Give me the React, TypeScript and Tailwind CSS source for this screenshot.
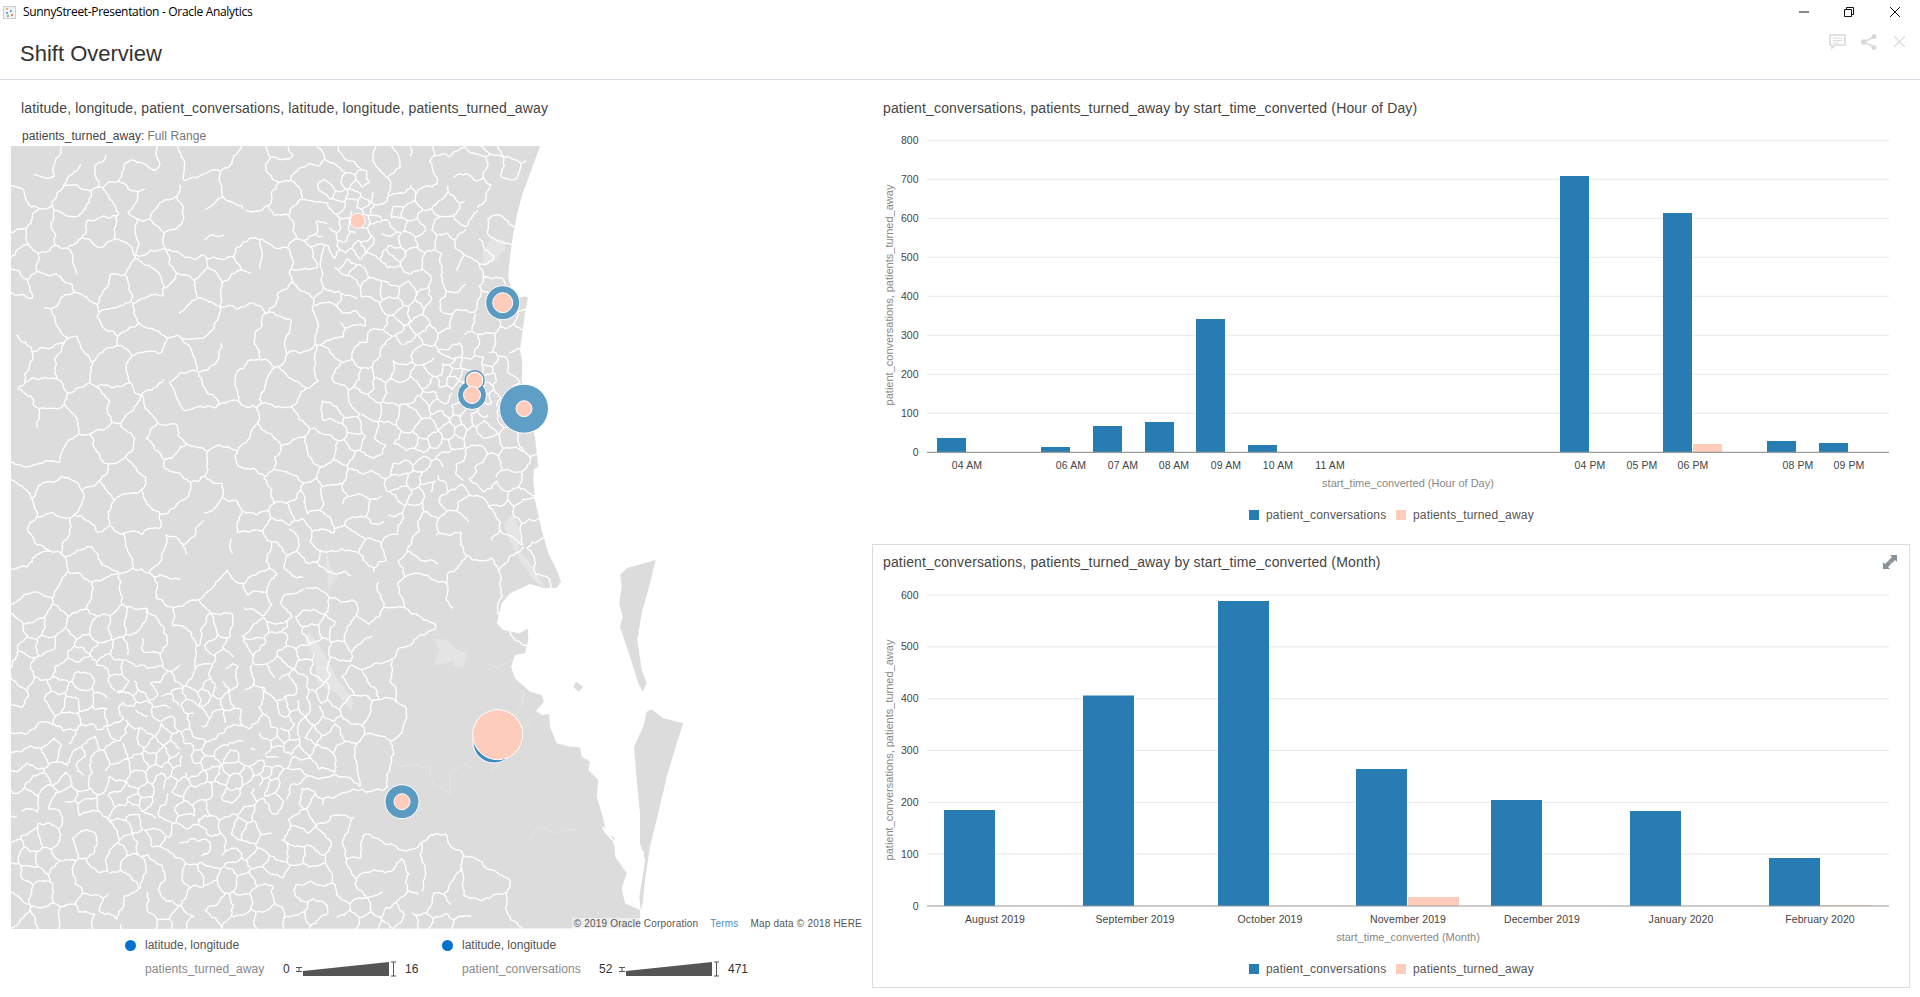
import React from "react";

type P = [number, number];
const z8 = (p: P): P => [350 + p[0] / 3, 640 + p[1] / 3];
const z7 = (p: P): P => [400 + p[0] / 3, 180 + p[1] / 3];
const z9 = (p: P): P => [p[0] / 3, 300 + p[1] / 3];
const z10 = (p: P): P => [p[0] / 3, 600 + p[1] / 3];
const z11 = (p: P): P => [450 + p[0] / 3, 470 + p[1] / 3];

let seed = 98765;
const rnd = () => {
  seed = (seed * 1664525 + 1013904223) % 4294967296;
  return seed / 4294967296;
};

const poly = (pts: P[]) => "M" + pts.map((p) => `${p[0].toFixed(1)} ${p[1].toFixed(1)}`).join("L") + "Z";
const inside = (pt: P, vs: P[]) => {
  let c = false;
  for (let i = 0, j = vs.length - 1; i < vs.length; j = i++) {
    const [xi, yi] = vs[i];
    const [xj, yj] = vs[j];
    if (yi > pt[1] !== yj > pt[1] && pt[0] < ((xj - xi) * (pt[1] - yi)) / (yj - yi) + xi) c = !c;
  }
  return c;
};

const mainland: P[] = [
  [11, 146],
  [540, 146],
  ...([[383,0],[368,40],[352,100],[338,170],[328,250],[325,290],[335,335],[360,352],[385,348],[375,400],[365,470],[360,510],[367,545],[365,600],[385,690],[405,770],[415,860],[402,868],[400,900]] as P[]).map(z7),
  ...([[250,30],[255,90],[275,180],[295,250],[320,300],[333,335],[320,353],[285,355],[240,342],[180,370],[155,400],[145,440],[140,460],[160,480],[210,490],[233,475],[235,510],[225,550],[195,555],[183,590],[195,625],[240,665],[275,675],[282,695],[258,722],[275,735],[297,732]] as P[]).map(z11),
  ...([[600,260],[620,310],[660,320],[690,322],[695,350],[720,365],[715,390],[745,420],[740,470],[755,520],[770,580],[795,595],[795,650],[830,700],[815,745],[825,790],[870,810],[870,865]] as P[]).map(z8),
  [11, 929],
];
const moreton = ([[510,315],[530,295],[617,270],[600,340],[575,430],[562,510],[575,600],[590,640],[578,665],[565,640],[540,560],[520,500],[510,470],[518,440],[508,400],[515,350]] as P[]).map(z11);
const islet = ([[378,635],[400,650],[385,665],[370,650]] as P[]).map(z11);
const stradbroke = ([[890,215],[905,208],[940,235],[1000,250],[985,295],[950,410],[915,560],[900,620],[885,720],[878,790],[872,810],[868,770],[880,700],[885,660],[870,610],[870,520],[860,420],[852,320],[880,260]] as P[]).map(z8);

const waters: P[][] = [
  ([[275,175],[315,180],[315,205],[290,240],[245,260],[250,215]] as P[]).map(z7),
  ([[925,95],[915,125],[945,175],[950,250],[1010,280],[1055,335],[1060,300],[1010,235],[975,165],[940,110]] as P[]).map(z10),
  ([[975,720],[990,800],[1015,830],[985,865],[980,800]] as P[]).map(z9),
  ([[1300,115],[1340,120],[1390,170],[1340,190],[1300,195],[1320,150]] as P[]).map(z10),
  ([[160,165],[190,130],[210,180],[205,240],[240,280],[285,350],[260,340],[215,280],[185,225]] as P[]).map(z11),
  ([[0,530],[50,550],[40,590],[10,590]] as P[]).map(z11),
];

const empty: P[] = [
  [390,600],[385,640],[397,668],[370,700],[382,743],[340,753],[317,763],[310,787],[330,797],[333,835],[370,840],[378,875],[410,870],[420,880],[470,885],[490,929],[660,929],[560,700],[530,600],[505,550],[440,545],[425,590],
];

const near = (x: number, y: number, cx: number, cy: number, d: number) => Math.hypot(x - cx, y - cy) < d;
const spacing = (x: number, y: number) => {
  if (near(x, y, 357, 225, 48)) return 8;
  if (near(x, y, 472, 395, 42)) return 7.5;
  if (near(x, y, 440, 470, 45)) return 11;
  if (near(x, y, 400, 320, 40)) return 13;
  if (x >= 130 && x <= 340 && y >= 690 && y <= 810) return 9.5;
  if (x < 345 && y >= 620) return y > 860 ? 17 : x < 60 ? 16 : 12;
  if (x >= 345 && y >= 850) return 14;
  if (x >= 330 && y >= 530) return 20;
  if (x >= 330) return 15;
  if (x >= 250 && y >= 500) return 16;
  return y < 300 ? 22 : 28;
};

const warp = (p: P): P => [
  p[0] + 3.5 * Math.sin(p[1] / 23 + 1) + 2.5 * Math.sin(p[0] / 17 + p[1] / 31),
  p[1] + 3.5 * Math.sin(p[0] / 27) + 2.5 * Math.cos(p[1] / 19 - p[0] / 41),
];

const fractal = (a: P, b: P, out: string[], rough = 0.34) => {
  const dx = b[0] - a[0];
  const dy = b[1] - a[1];
  const len = Math.hypot(dx, dy);
  if (len < 2.6) {
    out.push(`L${b[0].toFixed(1)} ${b[1].toFixed(1)}`);
    return;
  }
  const o = (rnd() - 0.5) * rough;
  const m: P = [a[0] + dx / 2 + dy * o, a[1] + dy / 2 - dx * o];
  fractal(a, m, out, rough);
  fractal(m, b, out, rough);
};

type V = { p: P; l: number };
const clipCell = (cell: V[], a: number, b: number, c: number, j: number) => {
  const out: V[] = [];
  for (let k = 0; k < cell.length; k++) {
    const cur = cell[k];
    const nxt = cell[(k + 1) % cell.length];
    const dc = a * cur.p[0] + b * cur.p[1] - c;
    const dn = a * nxt.p[0] + b * nxt.p[1] - c;
    const cross = (): P => {
      const t = dc / (dc - dn);
      return [cur.p[0] + (nxt.p[0] - cur.p[0]) * t, cur.p[1] + (nxt.p[1] - cur.p[1]) * t];
    };
    if (dc <= 0) {
      out.push(cur);
      if (dn > 0) out.push({ p: cross(), l: j });
    } else if (dn <= 0) {
      out.push({ p: cross(), l: cur.l });
    }
  }
  return out;
};

const buildNetwork = () => {
  const sites: P[] = [];
  const flags: boolean[] = [];
  for (let t = 0; t < 16000; t++) {
    const p: P = [11 + rnd() * 560, 146 + rnd() * 783];
    if (!inside(p, mainland)) continue;
    const isEmpty = inside(p, empty);
    const r = isEmpty ? 55 : spacing(p[0], p[1]);
    if (sites.some((s) => Math.hypot(s[0] - p[0], s[1] - p[1]) < r)) continue;
    sites.push(p);
    flags.push(isEmpty);
  }
  let d = "";
  sites.forEach((s, i) => {
    let cell: V[] = [
      { p: [-50, 60], l: -1 },
      { p: [760, 60], l: -1 },
      { p: [760, 1000], l: -1 },
      { p: [-50, 1000], l: -1 },
    ];
    sites.forEach((q, j) => {
      if (j === i) return;
      if (Math.hypot(q[0] - s[0], q[1] - s[1]) > 200) return;
      cell = clipCell(cell, 2 * (q[0] - s[0]), 2 * (q[1] - s[1]), q[0] * q[0] + q[1] * q[1] - s[0] * s[0] - s[1] * s[1], j);
    });
    for (let k = 0; k < cell.length; k++) {
      const e = cell[k];
      if (e.l <= i) continue;
      if (flags[i] && flags[e.l]) continue;
      if (rnd() < 0.2) continue;
      const a = warp(e.p);
      const b = warp(cell[(k + 1) % cell.length].p);
      const out: string[] = [`M${a[0].toFixed(1)} ${a[1].toFixed(1)}`];
      fractal(a, b, out);
      d += out.join("");
    }
  });
  return d;
};

const boundaries = buildNetwork();

const Z8faint: P[][] = [
  [[100,330],[150,380],[240,380],[250,430],[300,460],[300,400],[340,375],[380,390]],
  [[575,220],[520,270],[490,300],[420,395]],
  [[520,150],[490,240]],
  [[400,60],[440,80],[480,60]],
  [[530,610],[570,560],[620,580],[680,570]],
];
const chain = (pts: P[]) => {
  const out: string[] = [`M${pts[0][0].toFixed(1)} ${pts[0][1].toFixed(1)}`];
  for (let i = 1; i < pts.length; i++) fractal(pts[i - 1], pts[i], out, 0.2);
  return out.join("");
};
const faint = Z8faint.map((l) => chain(l.map(z8))).join("");
const mangrove = ([
  [[770,500],[800,530],[810,580],[850,520]],
  [[800,600],[850,600],[880,640],[840,680],[800,650],[800,600]],
  [[815,620],[860,650]],
  [[760,560],[790,600],[810,660]],
  [[780,460],[800,490]],
] as P[][]).map((l) => chain(l.map(z8))).join("");

function MapView() {
  return (
    <svg viewBox="11 146 851 783" className="block h-[783px] w-[851px]">
      <path d={poly(mainland)} className="fill-[#dcdcdc]" />
      {waters.map((w, i) => (
        <path key={i} d={poly(w)} className="fill-[#e5e5e5]" />
      ))}
      <path d={faint} className="fill-none stroke-[#e6e6e6] stroke-1" />
      <path d={boundaries} className="fill-none stroke-white stroke-[1.35]" />
      <path d={poly(moreton)} className="fill-[#dcdcdc]" />
      <path d={poly(islet)} className="fill-[#dcdcdc]" />
      <path d={poly(stradbroke)} className="fill-[#dcdcdc]" />
      <path d={mangrove} className="fill-none stroke-white stroke-2" />
      <g className="stroke-white stroke-1">
        <circle cx="494" cy="742" r="21" className="fill-[#3f8bbb]" />
        <circle cx="497.7" cy="734.7" r="25" className="fill-[#fdccbb]" />
        <circle cx="402" cy="801.7" r="17" className="fill-[#5c9bc1]" />
        <circle cx="402" cy="801.7" r="8" className="fill-[#fdccbb]" />
        <circle cx="524" cy="408.7" r="24.5" className="fill-[#5f9fc6]" />
        <circle cx="524" cy="408.7" r="8" className="fill-[#fdccbb]" />
        <circle cx="502.7" cy="302.7" r="17" className="fill-[#5c9bc1]" />
        <circle cx="502.7" cy="302.7" r="10" className="fill-[#fdccbb]" />
        <circle cx="472" cy="395" r="14.5" className="fill-[#5c9bc1]" />
        <circle cx="474.7" cy="380.3" r="9.5" className="fill-[#fdccbb] stroke-[#5c9bc1] stroke-[1.5]" />
        <circle cx="474.7" cy="380.3" r="8" className="fill-[#fdccbb]" />
        <circle cx="472" cy="395" r="8.5" className="fill-[#fdccbb]" />
        <circle cx="357.6" cy="220.7" r="7.5" className="fill-[#fdccbb]" />
      </g>
    </svg>
  );
}

type Bar = { x: number; w: number; top: number; pink?: boolean };
type ChartCfg = {
  vb: [number, number, number, number];
  ticks: { v: string; y: number }[];
  zeroY: number;
  bars: Bar[];
  labels: { t: string; x: number }[];
  labelY: number;
  xTitle: string;
  xTitleY: number;
  yTitleCy: number;
  legendY: number;
};

function Chart({ cfg }: { cfg: ChartCfg }) {
  const [vx, vy, vw, vh] = cfg.vb;
  return (
    <svg viewBox={`${vx} ${vy} ${vw} ${vh}`} width={vw} height={vh} className="block shrink-0">
      {cfg.ticks.map((t) => (
        <g key={t.v}>
          {t.v !== "0" && <line x1="927" x2="1889" y1={t.y} y2={t.y} className="stroke-[#e8e8ee] stroke-1" />}
          <text x="918.5" y={t.y + 3.5} textAnchor="end" className="fill-[#444444] text-[10.5px]">
            {t.v}
          </text>
        </g>
      ))}
      {cfg.bars.map((b, i) => (
        <rect key={i} x={b.x} y={b.top} width={b.w} height={cfg.zeroY - b.top} className={b.pink ? "fill-[#fdccbb]" : "fill-[#267cb3]"} />
      ))}
      <line x1="927" x2="1889" y1={cfg.zeroY} y2={cfg.zeroY} className="stroke-[#9a9a9a] stroke-[1.2]" />
      {cfg.labels.map((l) => (
        <text key={l.t} x={l.x} y={cfg.labelY + 3.5} textAnchor="middle" className="fill-[#444444] text-[10.5px] tracking-[0.1px]">
          {l.t}
        </text>
      ))}
      <text x="1408" y={cfg.xTitleY + 3.5} textAnchor="middle" className="fill-[#888888] text-[11px]">
        {cfg.xTitle}
      </text>
      <text
        x="0"
        y="0"
        textAnchor="middle"
        transform={`translate(892.5 ${cfg.yTitleCy}) rotate(-90)`}
        className="fill-[#888888] text-[11px]"
      >
        patient_conversations, patients_turned_away
      </text>
      <rect x="1249" y={cfg.legendY - 5} width="10" height="10" className="fill-[#267cb3]" />
      <text x="1266" y={cfg.legendY + 4} className="fill-[#555555] text-[12px] tracking-[0.17px]">
        patient_conversations
      </text>
      <rect x="1396" y={cfg.legendY - 5} width="10" height="10" className="fill-[#fdccbb]" />
      <text x="1413" y={cfg.legendY + 4} className="fill-[#555555] text-[12px] tracking-[0.17px]">
        patients_turned_away
      </text>
    </svg>
  );
}

const hb = (x: number, top: number, pink = false): Bar => ({ x, w: 29, top, pink });
const chart1: ChartCfg = {
  vb: [873, 125, 1036, 419],
  ticks: [800, 700, 600, 500, 400, 300, 200, 100, 0].map((v) => ({ v: String(v), y: 452.3 - v * 0.39 })),
  zeroY: 452.3,
  bars: [hb(937, 438), hb(1041, 447), hb(1093, 426), hb(1145, 422), hb(1196, 319), hb(1248, 445), hb(1560, 176), hb(1663, 213), hb(1693, 444, true), hb(1767, 441), hb(1819, 443)],
  labels: [
    ["04 AM", 967],
    ["06 AM", 1071],
    ["07 AM", 1123],
    ["08 AM", 1174],
    ["09 AM", 1226],
    ["10 AM", 1278],
    ["11 AM", 1330],
    ["04 PM", 1590],
    ["05 PM", 1642],
    ["06 PM", 1693],
    ["08 PM", 1798],
    ["09 PM", 1849],
  ].map(([t, x]) => ({ t: t as string, x: x as number })),
  labelY: 465,
  xTitle: "start_time_converted (Hour of Day)",
  xTitleY: 483,
  yTitleCy: 295,
  legendY: 515,
};

const mb = (x: number, top: number, pink = false): Bar => ({ x, w: 51, top, pink });
const chart2: ChartCfg = {
  vb: [873, 580, 1036, 407],
  ticks: [600, 500, 400, 300, 200, 100, 0].map((v) => ({ v: String(v), y: 906 - v * 0.5183 })),
  zeroY: 906,
  bars: [mb(944, 810), mb(1083, 695.5), mb(1218, 601), mb(1356, 769), mb(1408, 897, true), mb(1491, 800), mb(1630, 811), mb(1769, 858), mb(1820, 905, true)],
  labels: [
    ["August 2019", 995],
    ["September 2019", 1135],
    ["October 2019", 1270],
    ["November 2019", 1408],
    ["December 2019", 1542],
    ["January 2020", 1681],
    ["February 2020", 1820],
  ].map(([t, x]) => ({ t: t as string, x: x as number })),
  labelY: 919,
  xTitle: "start_time_converted (Month)",
  xTitleY: 937,
  yTitleCy: 750,
  legendY: 969,
};

function Wedge() {
  return (
    <svg width="101" height="16" viewBox="0 0 101 16" className="block shrink-0">
      <path d="M0 6.5H6M3 6.5V10.5M0 10.5H6" className="fill-none stroke-[#555555] stroke-1" />
      <polygon points="7,10 93,1 93,15 7,15" className="fill-[#555555]" />
      <path d="M95 1H100M97.5 1V15M95 15H100" className="fill-none stroke-[#555555] stroke-1" />
    </svg>
  );
}

function MapLegend({ label, min, max, minW, nameW }: { label: string; min: string; max: string; minW: string; nameW: string }) {
  return (
    <div className="w-[317px] shrink-0 text-[12px]">
      <div className="flex h-[16px] items-center">
        <span className="h-[11px] w-[11px] rounded-full bg-[#0572ce]" />
        <span className="ml-[9px] text-[#555555]">latitude, longitude</span>
      </div>
      <div className="mt-[8px] flex h-[16px] items-center pl-[20px]">
        <span className={`${nameW} whitespace-nowrap tracking-[0.1px] text-[#888888]`}>{label}</span>
        <span className={`${minW} whitespace-nowrap text-[#333333]`}>{min}</span>
        <Wedge />
        <span className="ml-[8px] text-[#333333]">{max}</span>
      </div>
    </div>
  );
}

export default function App() {
  return (
    <div className="flex h-[997px] w-[1920px] flex-col overflow-hidden bg-white font-['Liberation_Sans',Arial,sans-serif] text-[#333333]">
      <div className="flex h-[24px] shrink-0 items-center justify-between">
        <div className="flex items-center pl-[3px]">
          <svg width="13" height="13" viewBox="0 0 13 13" className="shrink-0">
            <rect x="0.5" y="0.5" width="12" height="12" className="fill-[#f1f1f4] stroke-[#cfcfd4] stroke-1" />
            <circle cx="4" cy="3" r="1" className="fill-[#e8a23a]" />
            <circle cx="8" cy="5" r="1" className="fill-[#4a8fd0]" />
            <circle cx="4" cy="7" r="1" className="fill-[#4a8fd0]" />
            <circle cx="9" cy="9" r="1" className="fill-[#d86a5a]" />
            <circle cx="5" cy="10" r="1" className="fill-[#5aa860]" />
          </svg>
          <span className="ml-[7px] whitespace-nowrap font-['Open_Sans',sans-serif] text-[12px] tracking-[-0.31px] text-[#000000]">
            SunnyStreet-Presentation - Oracle Analytics
          </span>
        </div>
        <div className="flex items-center pr-[20px]">
          <svg width="10" height="10" viewBox="0 0 10 10" className="mr-[35px]">
            <path d="M0 5H10" className="stroke-[#111111] stroke-1" />
          </svg>
          <svg width="10" height="10" viewBox="0 0 10 10" className="mr-[36px]">
            <path d="M2.5 2.5V.5H9.5V7.5H7.5M.5 2.5H7.5V9.5H.5Z" className="fill-none stroke-[#111111] stroke-1" />
          </svg>
          <svg width="10" height="10" viewBox="0 0 10 10">
            <path d="M0 0L10 10M10 0L0 10" className="stroke-[#111111] stroke-1" />
          </svg>
        </div>
      </div>

      <div className="flex h-[56px] shrink-0 justify-between border-b border-[#d8dfe6] pl-[20px] pr-[15px]">
        <h1 className="mt-[17px] text-[22px] font-normal leading-[26px] text-[#333333]">Shift Overview</h1>
        <div className="mt-[10px] flex items-start">
          <svg width="17" height="16" viewBox="0 0 17 16" className="mr-[15px]">
            <path d="M1 1H16V11H6L3 14V11H1Z" className="fill-none stroke-[#d9d9d9] stroke-[1.5]" />
            <path d="M4 4H13M4 6.5H13M4 9H10" className="stroke-[#d9d9d9] stroke-1" />
          </svg>
          <svg width="16" height="16" viewBox="0 0 16 16" className="mr-[17px]">
            <path d="M13 3L3 8L13 13" className="fill-none stroke-[#d9d9d9] stroke-[1.5]" />
            <circle cx="13" cy="2.6" r="2.5" className="fill-[#d9d9d9]" />
            <circle cx="2.8" cy="8" r="2.8" className="fill-[#d9d9d9]" />
            <circle cx="13" cy="13.4" r="2.5" className="fill-[#d9d9d9]" />
          </svg>
          <svg width="11" height="11" viewBox="0 0 11 11" className="mt-[2px]">
            <path d="M0 0L11 11M11 0L0 11" className="stroke-[#dcdcdc] stroke-[1.3]" />
          </svg>
        </div>
      </div>

      <div className="flex min-h-0 flex-1">
        <div className="flex w-[872px] shrink-0 flex-col">
          <div className="ml-[21px] mt-[20px] h-[17px] whitespace-nowrap text-[14px] leading-[17px] tracking-[0.13px] text-[#444444]">
            latitude, longitude, patient_conversations, latitude, longitude, patients_turned_away
          </div>
          <div className="ml-[22px] mt-[12px] h-[17px] whitespace-nowrap text-[12px] leading-[14px] tracking-[0.08px]">
            <span className="text-[#444444]">patients_turned_away:</span>
            <span className="ml-[3px] text-[#777777]">Full Range</span>
          </div>
          <div className="relative ml-[11px] w-[851px]">
            <MapView />
            <div className="absolute bottom-0 right-0 flex h-[11px] items-center whitespace-nowrap bg-white/50 pl-[2px] text-[10px] tracking-[0.2px] text-[#555555]">
              <span>© 2019 Oracle Corporation</span>
              <span className="ml-[12px] text-[#4a90c2]">Terms</span>
              <span className="ml-[12px]">Map data © 2018 HERE</span>
            </div>
          </div>
          <div className="mt-[8px] flex pl-[125px]">
            <MapLegend label="patients_turned_away" min="0" max="16" nameW="w-[138px]" minW="w-[13px]" />
            <MapLegend label="patient_conversations" min="52" max="471" nameW="w-[137px]" minW="w-[20px]" />
          </div>
        </div>

        <div className="flex min-w-0 flex-1 flex-col">
          <div className="flex h-[464px] shrink-0 flex-col pl-[1px]">
            <div className="ml-[10px] mt-[20px] h-[25px] whitespace-nowrap text-[14px] leading-[17px] tracking-[0.15px] text-[#444444]">
              patient_conversations, patients_turned_away by start_time_converted (Hour of Day)
            </div>
            <Chart cfg={chart1} />
          </div>
          <div className="flex h-[444px] w-[1038px] shrink-0 flex-col border border-[#dcdcdc]">
            <div className="flex h-[35px] shrink-0 items-start justify-between pl-[10px] pr-[12px]">
              <span className="mt-[9px] whitespace-nowrap text-[14px] leading-[17px] tracking-[0.15px] text-[#444444]">
                patient_conversations, patients_turned_away by start_time_converted (Month)
              </span>
              <svg width="14" height="14" viewBox="0 0 14 14" className="mt-[10px]">
                <path d="M7 0H14V7L12 5L8.5 8.5L5.5 5.5L9 2Z" className="fill-[#8a9299]" />
                <path d="M0 7L2 9L5.5 5.5L8.5 8.5L5 12L7 14H0Z" className="fill-[#8a9299]" />
              </svg>
            </div>
            <Chart cfg={chart2} />
          </div>
        </div>
      </div>
    </div>
  );
}
